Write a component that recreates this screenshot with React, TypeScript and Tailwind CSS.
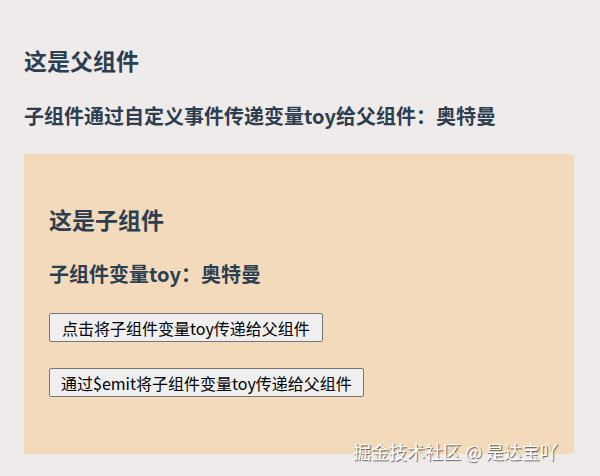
export default function App() {
  return (
    <div
      className="relative w-[600px] h-[476px] overflow-hidden bg-[#f0ebeb] text-[#2c3e50]"
      style={{ fontFamily: '"Noto Sans CJK SC", "Noto Sans", sans-serif' }}
    >
      <div className="pl-[24px] pr-[26px] pt-[44px]">
        <h2 className="text-[23px] leading-[32px] font-bold">这是父组件</h2>
        <h3 className="mt-[26px] text-[20px] leading-[28px] font-bold">子组件通过自定义事件传递变量toy给父组件：奥特曼</h3>
        <div className="mt-[24px] bg-[#f2dabb] pl-[25px] pt-[49px] pb-[57px]">
          <h2 className="text-[23px] leading-[32px] font-bold">这是子组件</h2>
          <h3 className="mt-[25px] text-[20px] leading-[28px] font-bold">子组件变量toy：奥特曼</h3>
          <div className="mt-[25px] flex flex-col items-start gap-[26px]">
            <button className="h-[29px] px-[12px] bg-[#efefef] border border-[#767676] rounded-[2px] text-[16px] leading-[20px] text-black">
              点击将子组件变量toy传递给父组件
            </button>
            <button className="h-[29px] px-[11px] bg-[#efefef] border border-[#767676] rounded-[2px] text-[16px] leading-[20px] text-black">
              通过$emit将子组件变量toy传递给父组件
            </button>
          </div>
        </div>
      </div>
      <div
        className="absolute left-[353px] top-[438px] text-[18px] leading-[26px] text-white whitespace-nowrap"
        style={{ textShadow: '1px 1px 1px rgba(0,0,0,0.6)' }}
      >
        掘金技术社区 @ 是达宝吖
      </div>
    </div>
  );
}
